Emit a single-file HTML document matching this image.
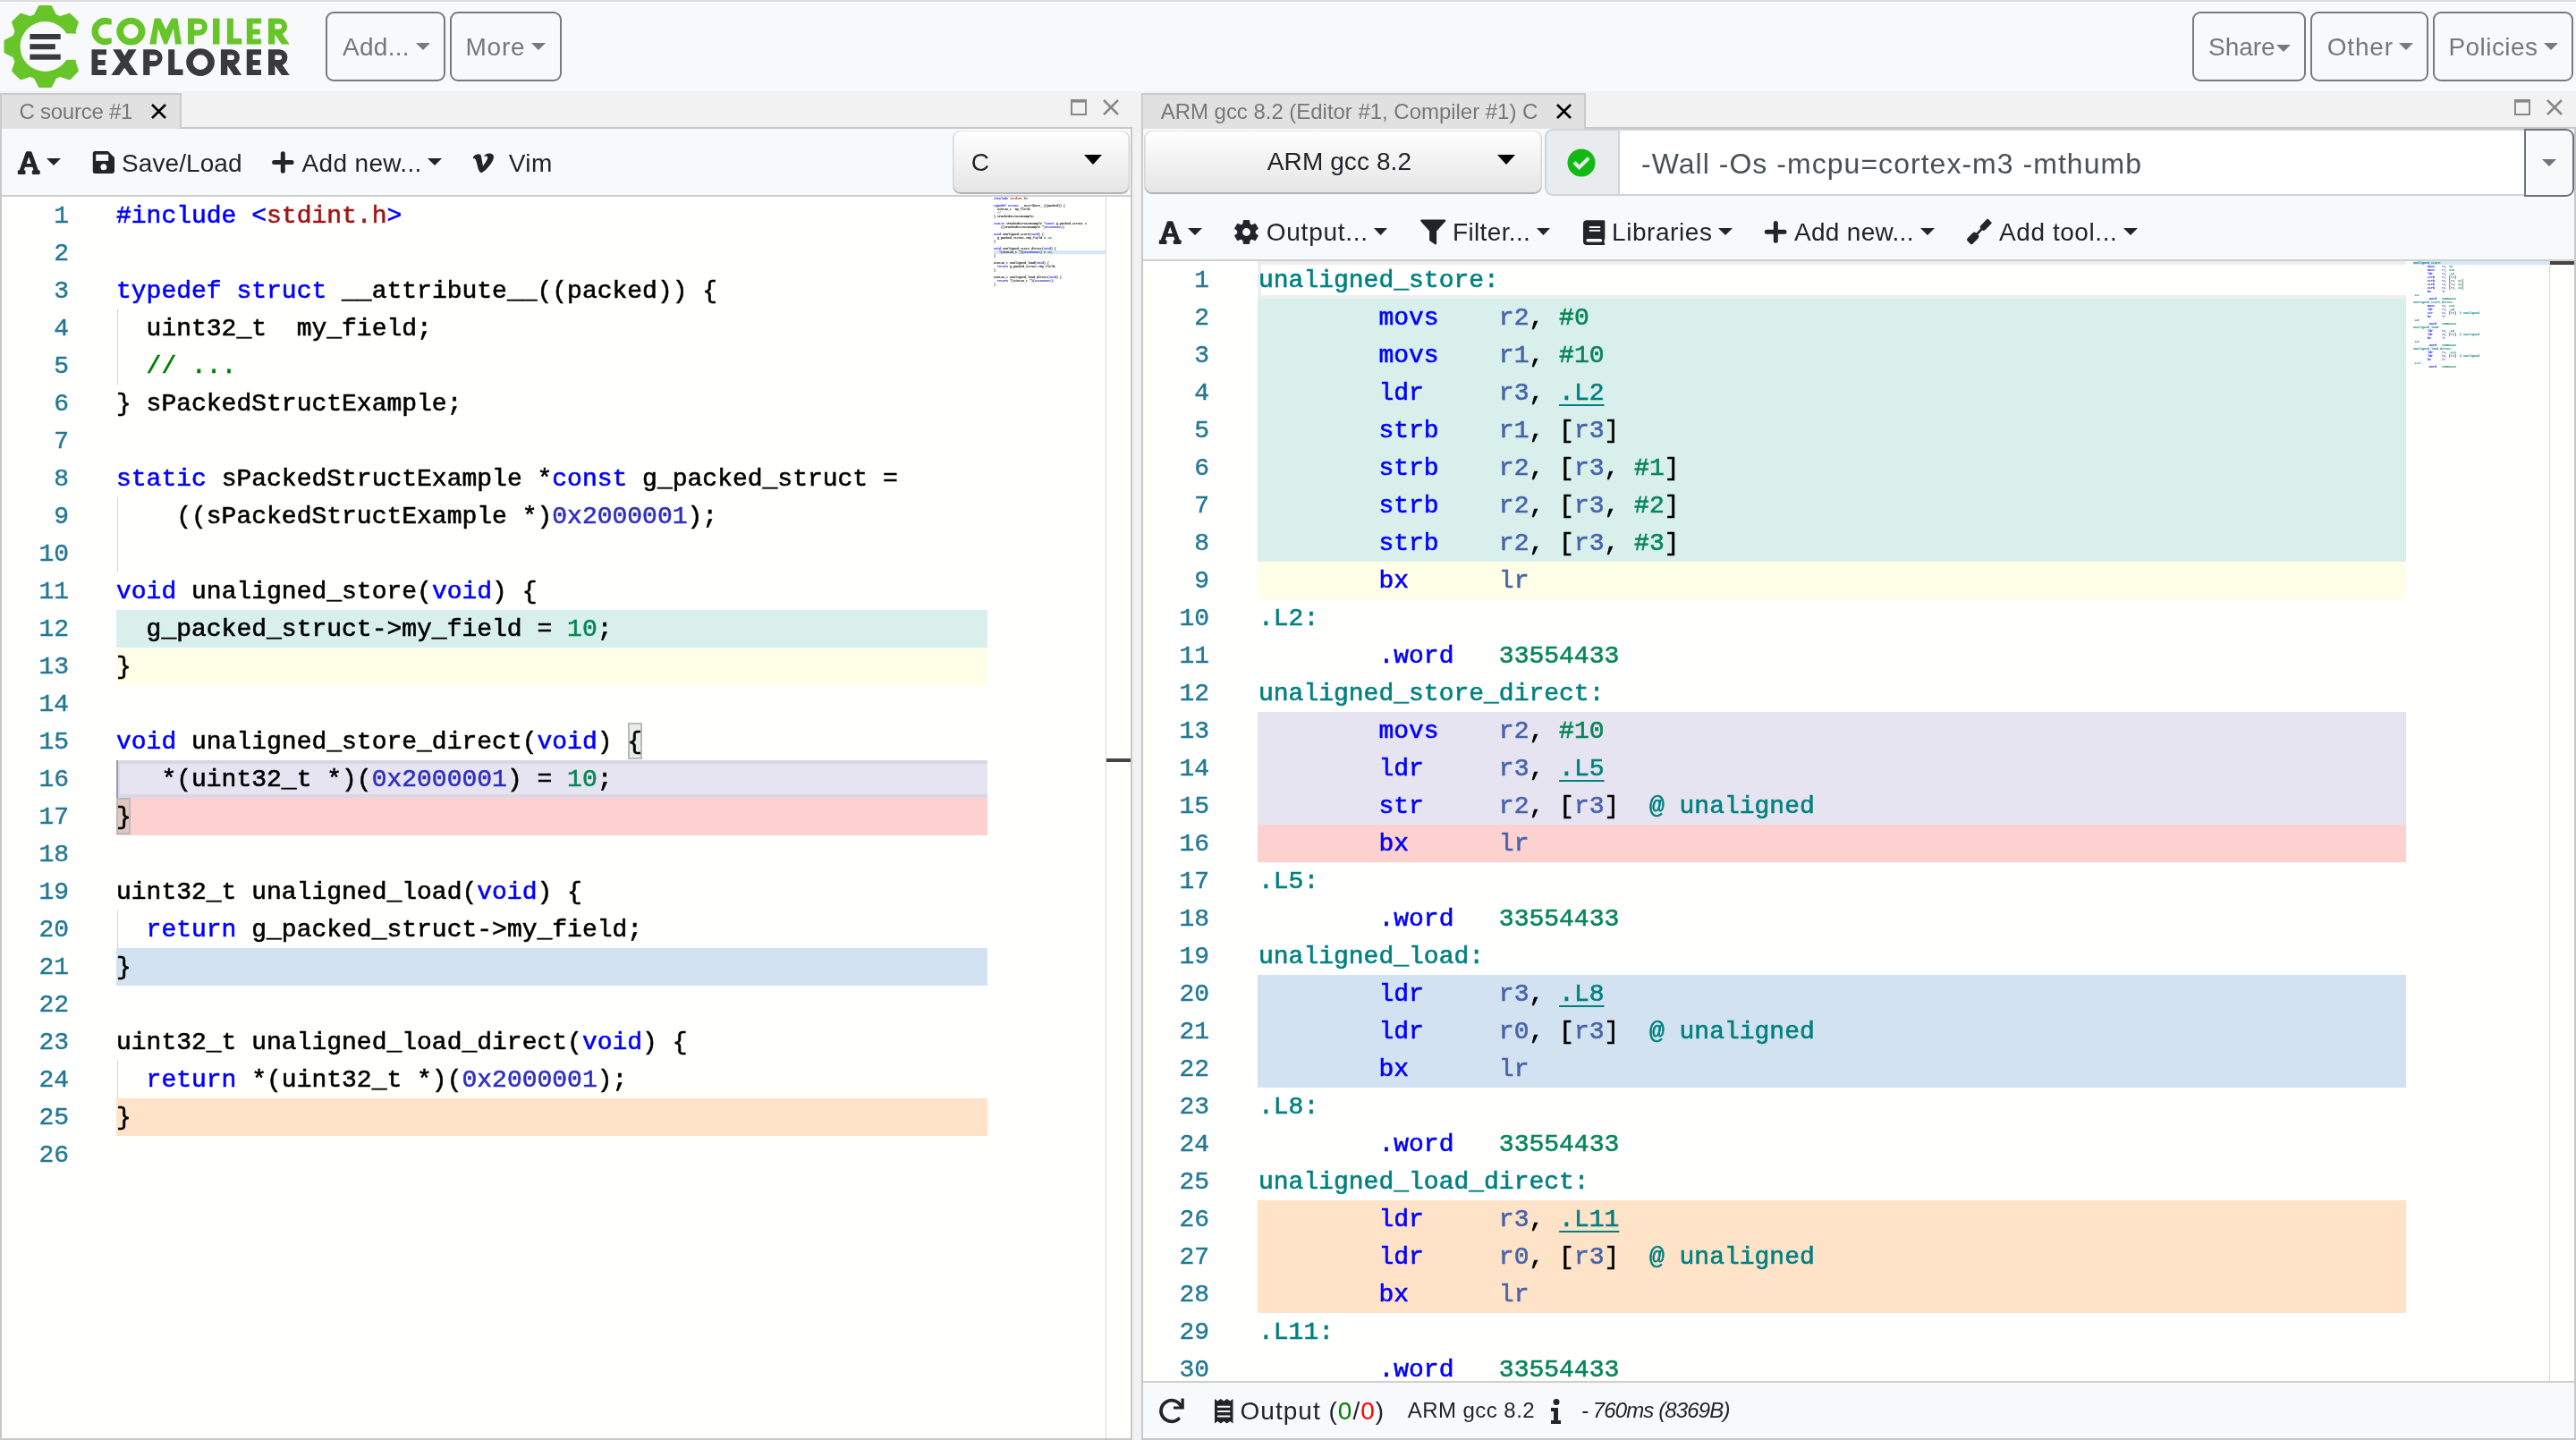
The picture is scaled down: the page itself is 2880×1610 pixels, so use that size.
<!DOCTYPE html><html><head><meta charset="utf-8"><title>Compiler Explorer</title><style>
*{box-sizing:border-box}
html,body{margin:0;padding:0}
body{width:2880px;height:1610px;overflow:hidden;position:relative;background:#f2f2f2;font-family:"Liberation Sans", sans-serif}
.ab{position:absolute;display:block}
.t{position:absolute;white-space:pre}
.r{position:absolute}
.code{position:absolute;font-family:"Liberation Mono", monospace;font-size:28px;line-height:42px;white-space:pre;color:#000;-webkit-text-stroke:0.6px currentColor}
.ln{position:absolute;font-family:"Liberation Mono", monospace;font-size:28px;line-height:42px;white-space:pre;color:#237893;text-align:right;-webkit-text-stroke:0.4px currentColor}
.k{color:#0000ff} .s{color:#a31515} .c{color:#008000} .n{color:#098658} .h{color:#3030c0}
.lb{color:#008080} .mn{color:#0000ff} .rg{color:#4864aa} .u{text-decoration:underline;text-underline-offset:5px;text-decoration-thickness:2px}
.mm{position:absolute;font-family:"Liberation Mono", monospace;font-size:28px;line-height:42px;white-space:pre;color:#000;transform-origin:0 0}
</style></head><body><div id="root" style="position:absolute;left:0;top:0;width:2880px;height:1610px;overflow:hidden;will-change:transform">
<div class="r" style="left:0;top:0;width:2880px;height:102px;background:#f8f9fa"></div>
<div class="r" style="left:0;top:0;width:2880px;height:2px;background:#dcdcdc"></div>
<svg class="ab" style="left:0;top:0" width="340" height="102" viewBox="0 0 340 102">
<g fill="#67c52a" stroke="#67c52a" stroke-width="3" stroke-linejoin="round"><polygon points="39.00,18.00 44.30,7.50 56.70,7.50 62.00,18.00"/><polygon points="66.41,19.83 77.58,16.15 86.35,24.92 82.67,36.09"/><polygon points="84.50,40.50 95.00,45.80 95.00,58.20 84.50,63.50"/><polygon points="82.67,67.91 86.35,79.08 77.58,87.85 66.41,84.17"/><polygon points="62.00,86.00 56.70,96.50 44.30,96.50 39.00,86.00"/><polygon points="34.59,84.17 23.42,87.85 14.65,79.08 18.33,67.91"/><polygon points="16.50,63.50 6.00,58.20 6.00,45.80 16.50,40.50"/><polygon points="18.33,36.09 14.65,24.92 23.42,16.15 34.59,19.83"/></g>
<circle cx="50.5" cy="52" r="38" fill="#67c52a"/>
<circle cx="50.5" cy="52" r="28" fill="#f8f9fa"/>
<rect x="60" y="37.5" width="40" height="29.3" fill="#f8f9fa"/>
<g fill="#3a3a3c"><rect x="33.4" y="38" width="34.3" height="6"/><rect x="33.4" y="49.2" width="28.4" height="6"/><rect x="33.4" y="60.7" width="34.3" height="6"/></g>
<path d="M102.50 35.05A14.9 15.2 0 1 0 132.30 35.05A14.9 15.2 0 1 0 102.50 35.05ZM109.95 35.05A7.45 7.9 0 1 1 124.85 35.05A7.45 7.9 0 1 1 109.95 35.05Z" fill="#67c52a" fill-rule="evenodd"/><path d="M117.4 27.60H126V42.50H117.4Z M124.8 18.5H133V51.6H124.8Z" fill="#f8f9fa"/><path d="M130.25 35.05A16.1 15.4 0 1 0 162.45 35.05A16.1 15.4 0 1 0 130.25 35.05ZM138.05 35.05A8.3 8.15 0 1 1 154.65 35.05A8.3 8.15 0 1 1 138.05 35.05Z" fill="#67c52a" fill-rule="evenodd"/><path d="M167.20 49.60L172.80 20.50L179.30 20.50L185.40 33.10L191.90 20.50L198.40 20.50L203.10 49.60L196.10 49.60L193.90 31.90L186.80 49.60L183.50 49.60L176.80 31.90L174.70 49.60Z" fill="#67c52a" fill-rule="evenodd"/><path d="M210 20.5H222.40A9.60 9.60 0 0 1 222.40 39.71H217.2V49.6H210ZM217.2 26.80H222.70A3.30 3.30 0 0 1 222.70 33.41H217.2Z" fill="#67c52a" fill-rule="evenodd"/><path d="M238 20.5H245.5V49.6H238Z" fill="#67c52a" fill-rule="evenodd"/><path d="M253.90 20.50L260.90 20.50L260.90 43.10L270.20 43.10L270.20 49.60L253.90 49.60Z" fill="#67c52a" fill-rule="evenodd"/><path d="M275.80 20.50L292.00 20.50L292.00 26.60L282.60 26.60L282.60 32.43L290.70 32.43L290.70 38.53L282.60 38.53L282.60 43.50L292.00 43.50L292.00 49.60L275.80 49.60Z" fill="#67c52a" fill-rule="evenodd"/><path d="M300 20.5H312.23A9.17 9.17 0 0 1 312.23 38.83H307.4V49.6H300ZM307.4 26.80H312.40A2.87 2.87 0 0 1 312.40 32.53H307.4Z" fill="#67c52a" fill-rule="evenodd"/><path d="M306.90 34.83L315.23 34.83L316.20 38.83L323.70 49.60L314.90 49.60L307.40 38.83Z" fill="#67c52a" fill-rule="evenodd"/><path d="M102.50 55.20L119.00 55.20L119.00 61.30L109.30 61.30L109.30 67.01L117.70 67.01L117.70 73.11L109.30 73.11L109.30 77.90L119.00 77.90L119.00 84.00L102.50 84.00Z" fill="#3a3a3c" fill-rule="evenodd"/><path d="M126.20 55.20L135.20 55.20L139.30 62.50L143.50 55.20L152.60 55.20L143.90 69.30L154.20 84.00L145.10 84.00L139.30 75.80L133.40 84.00L124.30 84.00L134.70 69.30Z" fill="#3a3a3c" fill-rule="evenodd"/><path d="M160.2 55.2H172.10A9.50 9.50 0 0 1 172.10 74.21H167.39999999999998V84.0H160.2ZM167.39999999999998 61.50H172.90A3.20 3.20 0 0 1 172.90 67.91H167.39999999999998Z" fill="#3a3a3c" fill-rule="evenodd"/><path d="M188.20 55.20L195.20 55.20L195.20 77.50L204.50 77.50L204.50 84.00L188.20 84.00Z" fill="#3a3a3c" fill-rule="evenodd"/><path d="M208.20 69.60A15.85 15.35 0 1 0 239.90 69.60A15.85 15.35 0 1 0 208.20 69.60ZM215.75 69.60A8.3 8.4 0 1 1 232.35 69.60A8.3 8.4 0 1 1 215.75 69.60Z" fill="#3a3a3c" fill-rule="evenodd"/><path d="M246.9 55.2H258.83A9.07 9.07 0 0 1 258.83 73.34H254.3V84.0H246.9ZM254.3 61.50H259.30A2.77 2.77 0 0 1 259.30 67.04H254.3Z" fill="#3a3a3c" fill-rule="evenodd"/><path d="M253.80 69.34L261.83 69.34L263.10 73.34L270.20 84.00L261.40 84.00L254.30 73.34Z" fill="#3a3a3c" fill-rule="evenodd"/><path d="M275.80 55.20L292.00 55.20L292.00 61.30L282.60 61.30L282.60 67.01L290.70 67.01L290.70 73.11L282.60 73.11L282.60 77.90L292.00 77.90L292.00 84.00L275.80 84.00Z" fill="#3a3a3c" fill-rule="evenodd"/><path d="M300 55.2H312.33A9.07 9.07 0 0 1 312.33 73.34H307.4V84.0H300ZM307.4 61.50H312.40A2.77 2.77 0 0 1 312.40 67.04H307.4Z" fill="#3a3a3c" fill-rule="evenodd"/><path d="M306.90 69.34L315.33 69.34L316.20 73.34L323.70 84.00L314.90 84.00L307.40 73.34Z" fill="#3a3a3c" fill-rule="evenodd"/></svg>
<div class="r" style="left:364px;top:13px;width:134px;height:78px;border:2px solid #7a7a7a;border-radius:9px"></div><div class="t" style="left:383.00px;top:33.30px;font-size:28px;line-height:40px;color:#777;letter-spacing:0.284px;">Add...</div><svg class="ab" style="left:465px;top:48px" width="16" height="8" viewBox="0 0 16 8"><path d="M0 0H16L8.0 8Z" fill="#7a7a7a"/></svg>
<div class="r" style="left:503px;top:13px;width:125px;height:78px;border:2px solid #7a7a7a;border-radius:9px"></div><div class="t" style="left:520.50px;top:33.30px;font-size:28px;line-height:40px;color:#777;letter-spacing:0.760px;">More</div><svg class="ab" style="left:594px;top:48px" width="16" height="8" viewBox="0 0 16 8"><path d="M0 0H16L8.0 8Z" fill="#7a7a7a"/></svg>
<div class="r" style="left:2451px;top:13px;width:127px;height:78px;border:2px solid #7a7a7a;border-radius:9px"></div><div class="t" style="left:2469.00px;top:33.30px;font-size:28px;line-height:40px;color:#777;letter-spacing:-0.036px;">Share</div><svg class="ab" style="left:2545px;top:50px" width="16" height="8" viewBox="0 0 16 8"><path d="M0 0H16L8.0 8Z" fill="#7a7a7a"/></svg>
<div class="r" style="left:2583px;top:13px;width:132px;height:78px;border:2px solid #7a7a7a;border-radius:9px"></div><div class="t" style="left:2601.70px;top:33.30px;font-size:28px;line-height:40px;color:#777;letter-spacing:0.849px;">Other</div><svg class="ab" style="left:2682px;top:47.5px" width="16" height="8" viewBox="0 0 16 8"><path d="M0 0H16L8.0 8Z" fill="#7a7a7a"/></svg>
<div class="r" style="left:2720px;top:13px;width:157px;height:78px;border:2px solid #7a7a7a;border-radius:9px"></div><div class="t" style="left:2737.50px;top:33.30px;font-size:28px;line-height:40px;color:#777;letter-spacing:0.431px;">Policies</div><svg class="ab" style="left:2844px;top:47.5px" width="16" height="8" viewBox="0 0 16 8"><path d="M0 0H16L8.0 8Z" fill="#7a7a7a"/></svg>
<div class="r" style="left:0;top:142px;width:1266px;height:1468px;border:2px solid #c8c8c8;background:#f8f9fa"></div>
<div class="r" style="left:0;top:104px;width:203px;height:40px;background:#e1e1e1;border:2px solid #cbcbcb;border-bottom:none"></div>
<div class="t" style="left:21.50px;top:104.68px;font-size:24px;line-height:40px;color:#777;letter-spacing:-0.255px;">C source #1</div>
<svg class="ab" style="left:169px;top:116px" width="17" height="17" viewBox="0 0 17 17"><path d="M1 1L16 16M16 1L1 16" stroke="#000" stroke-width="2.6" fill="none"/></svg>
<svg class="ab" style="left:1197px;top:111px" width="18" height="18" viewBox="0 0 18 18"><rect x="1" y="1" width="16" height="16" fill="none" stroke="#888" stroke-width="2"/><rect x="0" y="0" width="18" height="3.6" fill="#888"/></svg>
<svg class="ab" style="left:1233px;top:111px" width="18" height="18" viewBox="0 0 18 18"><path d="M1 1L17 17M17 1L1 17" stroke="#888" stroke-width="2.5" fill="none"/></svg>
<div class="r" style="left:1276px;top:142px;width:1604px;height:1468px;border:2px solid #c8c8c8;background:#f8f9fa"></div>
<div class="r" style="left:1276px;top:104px;width:497px;height:40px;background:#e1e1e1;border:2px solid #cbcbcb;border-bottom:none"></div>
<div class="t" style="left:1297.70px;top:105.48px;font-size:24px;line-height:40px;color:#777;letter-spacing:-0.032px;">ARM gcc 8.2 (Editor #1, Compiler #1) C</div>
<svg class="ab" style="left:1740px;top:116px" width="17" height="17" viewBox="0 0 17 17"><path d="M1 1L16 16M16 1L1 16" stroke="#000" stroke-width="2.6" fill="none"/></svg>
<svg class="ab" style="left:2811px;top:111px" width="18" height="18" viewBox="0 0 18 18"><rect x="1" y="1" width="16" height="16" fill="none" stroke="#888" stroke-width="2"/><rect x="0" y="0" width="18" height="3.6" fill="#888"/></svg>
<svg class="ab" style="left:2847px;top:111px" width="18" height="18" viewBox="0 0 18 18"><path d="M1 1L17 17M17 1L1 17" stroke="#888" stroke-width="2.5" fill="none"/></svg>
<div class="r" style="left:2px;top:218px;width:1262px;height:2px;background:#cfcfcf"></div>
<svg class="ab" style="left:19px;top:168.5px" width="27" height="27" viewBox="0 0 27 27"><path d="M11.2 0.3H15.2Q16.2 0.3 16.6 1.3L23.8 21.3H24.6Q25.7 21.3 25.7 22.4V24.7Q25.7 25.9 24.6 25.9H17.9Q16.8 25.9 16.8 24.7V22.4Q16.8 21.3 17.9 21.3H18.6L17.3 17.8H9L7.7 21.3H8.4Q9.5 21.3 9.5 22.4V24.7Q9.5 25.9 8.4 25.9H1.9Q0.8 25.9 0.8 24.7V22.4Q0.8 21.3 1.9 21.3H2.8L9.8 1.3Q10.2 0.3 11.2 0.3ZM13.2 6.6L10.6 14H15.8Z" fill="#212529" fill-rule="evenodd"/></svg>
<svg class="ab" style="left:52px;top:177px" width="16" height="8" viewBox="0 0 16 8"><path d="M0 0H16L8.0 8Z" fill="#212529"/></svg>
<svg class="ab" style="left:103px;top:169px" width="26" height="26" viewBox="0 0 26 26"><path d="M3.3 0H17.8L25 7.2V22A3 3 0 0 1 22 25H3.3A2.5 2.5 0 0 1 0.8 22.5V2.5A2.5 2.5 0 0 1 3.3 0Z" fill="#212529"/><rect x="4.2" y="3.7" width="14" height="7.2" fill="#f8f9fa"/><circle cx="12.9" cy="17.7" r="3.5" fill="#f8f9fa"/></svg>
<div class="t" style="left:136.00px;top:162.60px;font-size:28px;line-height:40px;color:#212529;letter-spacing:0.085px;">Save/Load</div>
<svg class="ab" style="left:302px;top:167px" width="29" height="29" viewBox="0 0 29 29"><path d="M14.3 4.7V24.2M4.6 14.5H24.1" stroke="#212529" stroke-width="5" stroke-linecap="round"/></svg>
<div class="t" style="left:337.60px;top:162.60px;font-size:28px;line-height:40px;color:#212529;letter-spacing:0.325px;">Add new...</div>
<svg class="ab" style="left:478px;top:177px" width="16" height="8" viewBox="0 0 16 8"><path d="M0 0H16L8.0 8Z" fill="#212529"/></svg>
<svg class="ab" style="left:527.5px;top:170.5px" width="26" height="22" viewBox="0 0 26 24" preserveAspectRatio="none"><path d="M1 5C4 1 9 0 10 4L12 16C14 13 18 7 17 5C16 3 14 4 13 5C14 -1 24 -1 24 5C24 11 15 22 11 24C7 25 6 16 5 12C4 9 4 6 1 7Z" fill="#212529"/></svg>
<div class="t" style="left:568.70px;top:162.60px;font-size:28px;line-height:40px;color:#212529;letter-spacing:0.455px;">Vim</div>
<div class="r" style="left:1065px;top:145.5px;width:198px;height:69px;border-radius:9px;background:linear-gradient(#ffffff,#e5e5e5);box-shadow:inset 1.5px 0 0 #d6d6d6, inset -1.5px 0 0 #d6d6d6, inset 0 1px 0 #e8e8e8, 0 2px 0 #b2b2b2"></div>
<div class="t" style="left:1085.70px;top:161.60px;font-size:28px;line-height:40px;color:#212529;letter-spacing:0.000px;">C</div>
<svg class="ab" style="left:1212px;top:173px" width="20" height="11" viewBox="0 0 20 11"><path d="M0 0H20L10.0 11Z" fill="#000"/></svg>
<div class="r" style="left:2px;top:220px;width:1262px;height:1388px;background:#fffffe;overflow:hidden"></div>
<div class="r" style="left:130px;top:682px;width:974px;height:42px;background:#d8efec"></div>
<div class="r" style="left:130px;top:724px;width:974px;height:42px;background:#fffee6"></div>
<div class="r" style="left:130px;top:850px;width:974px;height:42px;background:#e6e4f1"></div>
<div class="r" style="left:130px;top:892px;width:974px;height:42px;background:#fdd1cf"></div>
<div class="r" style="left:130px;top:1060px;width:974px;height:42px;background:#d3e2f0"></div>
<div class="r" style="left:130px;top:1228px;width:974px;height:42px;background:#fee3c9"></div>
<div class="r" style="left:130px;top:850px;width:974px;height:42px;border:4px solid rgba(0,0,0,0.055);border-right:none"></div>
<div class="r" style="left:131px;top:346px;width:1px;height:84px;background:#d3d3d3"></div>
<div class="r" style="left:131px;top:556px;width:1px;height:84px;background:#d3d3d3"></div>
<div class="r" style="left:131px;top:1018px;width:1px;height:42px;background:#d3d3d3"></div>
<div class="r" style="left:131px;top:1186px;width:1px;height:42px;background:#d3d3d3"></div>
<div class="r" style="left:701.7px;top:808px;width:16px;height:41px;background:#e5efe5;border:2px solid #b9b9b9"></div>
<div class="r" style="left:130px;top:892px;width:16px;height:41px;background:#e0c8c0;border:2px solid #b9b9b9"></div>
<div class="r" style="left:130px;top:850px;width:2px;height:42px;background:#9b99ab"></div>
<div class="code" style="left:130px;top:221px"><span class="k">#include</span> <span class="k">&lt;</span><span class="s">stdint.h</span><span class="k">&gt;</span>

<span class="k">typedef</span> <span class="k">struct</span> __attribute__((packed)) {
  uint32_t  my_field;
  <span class="c">// ...</span>
} sPackedStructExample;

<span class="k">static</span> sPackedStructExample *<span class="k">const</span> g_packed_struct =
    ((sPackedStructExample *)<span class="h">0x2000001</span>);

<span class="k">void</span> unaligned_store(<span class="k">void</span>) {
  g_packed_struct-&gt;my_field = <span class="n">10</span>;
}

<span class="k">void</span> unaligned_store_direct(<span class="k">void</span>) {
   *(uint32_t *)(<span class="h">0x2000001</span>) = <span class="n">10</span>;
}

uint32_t unaligned_load(<span class="k">void</span>) {
  <span class="k">return</span> g_packed_struct-&gt;my_field;
}

uint32_t unaligned_load_direct(<span class="k">void</span>) {
  <span class="k">return</span> *(uint32_t *)(<span class="h">0x2000001</span>);
}
</div>
<div class="ln" style="left:2px;top:221px;width:75px">1
2
3
4
5
6
7
8
9
10
11
12
13
14
15
16
17
18
19
20
21
22
23
24
25
26</div>
<div class="r" style="left:1104px;top:220px;width:132px;height:1388px;background:#fffffe"></div>
<div class="r" style="left:1111px;top:280px;width:125px;height:4px;background:#d6e7fb"></div>
<div class="mm" style="left:1111px;top:220px;transform:scale(0.1190,0.0952);font-weight:bold"><span class="k">#include</span> <span class="k">&lt;</span><span class="s">stdint.h</span><span class="k">&gt;</span>

<span class="k">typedef</span> <span class="k">struct</span> __attribute__((packed)) {
  uint32_t  my_field;
  <span class="c">// ...</span>
} sPackedStructExample;

<span class="k">static</span> sPackedStructExample *<span class="k">const</span> g_packed_struct =
    ((sPackedStructExample *)<span class="h">0x2000001</span>);

<span class="k">void</span> unaligned_store(<span class="k">void</span>) {
  g_packed_struct-&gt;my_field = <span class="n">10</span>;
}

<span class="k">void</span> unaligned_store_direct(<span class="k">void</span>) {
   *(uint32_t *)(<span class="h">0x2000001</span>) = <span class="n">10</span>;
}

uint32_t unaligned_load(<span class="k">void</span>) {
  <span class="k">return</span> g_packed_struct-&gt;my_field;
}

uint32_t unaligned_load_direct(<span class="k">void</span>) {
  <span class="k">return</span> *(uint32_t *)(<span class="h">0x2000001</span>);
}
</div>
<div class="r" style="left:1236px;top:220px;width:1px;height:1388px;background:#d8d8d8"></div>
<div class="r" style="left:1237px;top:848px;width:27px;height:4px;background:#454545"></div>
<div class="r" style="left:1279px;top:145.5px;width:445px;height:69px;border-radius:9px;background:linear-gradient(#ffffff,#e5e5e5);box-shadow:inset 1.5px 0 0 #d6d6d6, inset -1.5px 0 0 #d6d6d6, inset 0 1px 0 #e8e8e8, 0 2px 0 #b2b2b2"></div>
<div class="t" style="left:1416.80px;top:160.90px;font-size:28px;line-height:40px;color:#212529;letter-spacing:0.100px;">ARM gcc 8.2</div>
<svg class="ab" style="left:1674px;top:173px" width="20" height="11" viewBox="0 0 20 11"><path d="M0 0H20L10.0 11Z" fill="#000"/></svg>
<div class="r" style="left:1727px;top:144px;width:84px;height:75px;background:#e9ecef;border:2px solid #ced4da;border-right:none;border-radius:9px 0 0 9px"></div>
<svg class="ab" style="left:1752px;top:166px" width="32" height="32" viewBox="0 0 32 32"><circle cx="16" cy="16" r="15.5" fill="#13b913"/><path d="M8 15.5L13.6 21.2L24.2 10.7" stroke="#e9ecef" stroke-width="4" fill="none" stroke-linecap="butt" stroke-linejoin="miter"/></svg>
<div class="r" style="left:1809px;top:144px;width:1014px;height:75px;background:#fff;border:2px solid #ced4da;border-right:none"></div>
<div class="t" style="left:1835.00px;top:162.91px;font-size:32px;line-height:40px;color:#495057;letter-spacing:1.031px;">-Wall -Os -mcpu=cortex-m3 -mthumb</div>
<div class="r" style="left:2822px;top:144px;width:56px;height:76px;background:#f8f9fa;border:2px solid #6c757d;border-radius:0 9px 9px 0"></div>
<svg class="ab" style="left:2842px;top:178px" width="16" height="8" viewBox="0 0 16 8"><path d="M0 0H16L8.0 8Z" fill="#6c757d"/></svg>
<svg class="ab" style="left:1295px;top:246.5px" width="27" height="27" viewBox="0 0 27 27"><path d="M11.2 0.3H15.2Q16.2 0.3 16.6 1.3L23.8 21.3H24.6Q25.7 21.3 25.7 22.4V24.7Q25.7 25.9 24.6 25.9H17.9Q16.8 25.9 16.8 24.7V22.4Q16.8 21.3 17.9 21.3H18.6L17.3 17.8H9L7.7 21.3H8.4Q9.5 21.3 9.5 22.4V24.7Q9.5 25.9 8.4 25.9H1.9Q0.8 25.9 0.8 24.7V22.4Q0.8 21.3 1.9 21.3H2.8L9.8 1.3Q10.2 0.3 11.2 0.3ZM13.2 6.6L10.6 14H15.8Z" fill="#212529" fill-rule="evenodd"/></svg>
<svg class="ab" style="left:1328px;top:255px" width="16" height="8" viewBox="0 0 16 8"><path d="M0 0H16L8.0 8Z" fill="#212529"/></svg>
<svg class="ab" style="left:1380.4px;top:246px" width="27" height="27" viewBox="0 0 27 27"><g fill="#212529" stroke="#212529" stroke-width="1" stroke-linejoin="round"><polygon points="9.90,4.50 10.40,0.30 16.60,0.30 17.10,4.50"/><polygon points="19.49,5.88 23.38,4.22 26.48,9.58 23.09,12.12"/><polygon points="23.09,14.88 26.48,17.42 23.38,22.78 19.49,21.12"/><polygon points="17.10,22.50 16.60,26.70 10.40,26.70 9.90,22.50"/><polygon points="7.51,21.12 3.62,22.78 0.52,17.42 3.91,14.88"/><polygon points="3.91,12.12 0.52,9.58 3.62,4.22 7.51,5.88"/></g><circle cx="13.5" cy="13.5" r="10.3" fill="#212529"/><circle cx="13.5" cy="13.5" r="4.4" fill="#f8f9fa"/></svg>
<div class="t" style="left:1415.80px;top:240.10px;font-size:28px;line-height:40px;color:#212529;letter-spacing:0.736px;">Output...</div>
<svg class="ab" style="left:1536.3px;top:255px" width="15" height="8" viewBox="0 0 15 8"><path d="M0 0H15L7.5 8Z" fill="#212529"/></svg>
<svg class="ab" style="left:1586px;top:244px" width="32" height="31" viewBox="0 0 32 31"><path d="M3.2 2.7H29.2L19 13.9V28.3L13.2 24.4V13.9Z" fill="#212529" stroke="#212529" stroke-width="2.2" stroke-linejoin="round"/></svg>
<div class="t" style="left:1624.00px;top:240.10px;font-size:28px;line-height:40px;color:#212529;letter-spacing:0.346px;">Filter...</div>
<svg class="ab" style="left:1718.3px;top:255px" width="15" height="8" viewBox="0 0 15 8"><path d="M0 0H15L7.5 8Z" fill="#212529"/></svg>
<svg class="ab" style="left:1769px;top:244.5px" width="27" height="30" viewBox="0 0 27 30"><path d="M5 1.2H24.3Q25.3 1.2 25.3 2.2V21.8Q25.3 22.6 24.6 22.9V26.8Q25.3 27 25.3 27.8V28Q25.3 29 24.3 29H5.3Q1 29 1 24.7V5.2Q1 1.2 5 1.2Z" fill="#212529"/><rect x="4.4" y="22.1" width="17.8" height="3.4" rx="1.7" fill="#f8f9fa"/><rect x="7.8" y="8" width="12.4" height="2" fill="#f8f9fa"/><rect x="7.8" y="11.9" width="12.4" height="1.8" fill="#f8f9fa"/></svg>
<div class="t" style="left:1802.00px;top:240.10px;font-size:28px;line-height:40px;color:#212529;letter-spacing:0.565px;">Libraries</div>
<svg class="ab" style="left:1921px;top:255px" width="16" height="8" viewBox="0 0 16 8"><path d="M0 0H16L8.0 8Z" fill="#212529"/></svg>
<svg class="ab" style="left:1971px;top:245px" width="29" height="29" viewBox="0 0 29 29"><path d="M14.3 4.5V24.2M4.3 14.3H24" stroke="#212529" stroke-width="5" stroke-linecap="round"/></svg>
<div class="t" style="left:2006.00px;top:240.10px;font-size:28px;line-height:40px;color:#212529;letter-spacing:0.302px;">Add new...</div>
<svg class="ab" style="left:2147px;top:255px" width="16" height="8" viewBox="0 0 16 8"><path d="M0 0H16L8.0 8Z" fill="#212529"/></svg>
<svg class="ab" style="left:1998px;top:244px" width="0" height="0"></svg>
<svg class="ab" style="left:2193px;top:240px" width="40" height="40" viewBox="0 0 40 40"><g transform="translate(8.2 31) rotate(-46)" fill="#212529"><path d="M0 -2Q0 -4.3 2.3 -4.3H10.5Q13.2 -4.3 13.2 -1.6V1.6Q13.2 4.3 10.5 4.3H2.3Q0 4.3 0 2Z"/><rect x="12" y="-1.4" width="9" height="2.8"/><path d="M20.5 -2.4L22 -3.5H32.6Q33.7 -3.5 33.7 -2.4V2.4Q33.7 3.5 32.6 3.5H22L20.5 2.4Z"/></g></svg>
<div class="t" style="left:2235.00px;top:240.10px;font-size:28px;line-height:40px;color:#212529;letter-spacing:0.570px;">Add tool...</div>
<svg class="ab" style="left:2374px;top:255px" width="16" height="8" viewBox="0 0 16 8"><path d="M0 0H16L8.0 8Z" fill="#212529"/></svg>
<div class="r" style="left:1278px;top:290px;width:1600px;height:2px;background:#cfcfcf"></div>
<div class="r" style="left:1278px;top:292px;width:1600px;height:1252px;background:#fffffe;overflow:hidden"></div>
<div class="r" style="left:1278px;top:292px;width:1600px;height:1252px;overflow:hidden">
<div class="r" style="left:128px;top:42px;width:1284px;height:42px;background:#d8efec"></div>
<div class="r" style="left:128px;top:84px;width:1284px;height:42px;background:#d8efec"></div>
<div class="r" style="left:128px;top:126px;width:1284px;height:42px;background:#d8efec"></div>
<div class="r" style="left:128px;top:168px;width:1284px;height:42px;background:#d8efec"></div>
<div class="r" style="left:128px;top:210px;width:1284px;height:42px;background:#d8efec"></div>
<div class="r" style="left:128px;top:252px;width:1284px;height:42px;background:#d8efec"></div>
<div class="r" style="left:128px;top:294px;width:1284px;height:42px;background:#d8efec"></div>
<div class="r" style="left:128px;top:336px;width:1284px;height:42px;background:#fffee6"></div>
<div class="r" style="left:128px;top:504px;width:1284px;height:42px;background:#e6e4f1"></div>
<div class="r" style="left:128px;top:546px;width:1284px;height:42px;background:#e6e4f1"></div>
<div class="r" style="left:128px;top:588px;width:1284px;height:42px;background:#e6e4f1"></div>
<div class="r" style="left:128px;top:630px;width:1284px;height:42px;background:#fdd1cf"></div>
<div class="r" style="left:128px;top:798px;width:1284px;height:42px;background:#d3e2f0"></div>
<div class="r" style="left:128px;top:840px;width:1284px;height:42px;background:#d3e2f0"></div>
<div class="r" style="left:128px;top:882px;width:1284px;height:42px;background:#d3e2f0"></div>
<div class="r" style="left:128px;top:1050px;width:1284px;height:42px;background:#fee3c9"></div>
<div class="r" style="left:128px;top:1092px;width:1284px;height:42px;background:#fee3c9"></div>
<div class="r" style="left:128px;top:1134px;width:1284px;height:42px;background:#fee3c9"></div>
<div class="r" style="left:128px;top:0px;width:1284px;height:42px;border:4px solid #eeeeee;border-right:none"></div>
<div class="code" style="left:129px;top:1px"><span class="lb">unaligned_store:</span>
        <span class="mn">movs</span>    <span class="rg">r2</span>, <span class="n">#0</span>
        <span class="mn">movs</span>    <span class="rg">r1</span>, <span class="n">#10</span>
        <span class="mn">ldr</span>     <span class="rg">r3</span>, <span class="lb u">.L2</span>
        <span class="mn">strb</span>    <span class="rg">r1</span>, [<span class="rg">r3</span>]
        <span class="mn">strb</span>    <span class="rg">r2</span>, [<span class="rg">r3</span>, <span class="n">#1</span>]
        <span class="mn">strb</span>    <span class="rg">r2</span>, [<span class="rg">r3</span>, <span class="n">#2</span>]
        <span class="mn">strb</span>    <span class="rg">r2</span>, [<span class="rg">r3</span>, <span class="n">#3</span>]
        <span class="mn">bx</span>      <span class="rg">lr</span>
<span class="lb">.L2:</span>
        <span class="mn">.word</span>   <span class="n">33554433</span>
<span class="lb">unaligned_store_direct:</span>
        <span class="mn">movs</span>    <span class="rg">r2</span>, <span class="n">#10</span>
        <span class="mn">ldr</span>     <span class="rg">r3</span>, <span class="lb u">.L5</span>
        <span class="mn">str</span>     <span class="rg">r2</span>, [<span class="rg">r3</span>]  <span class="lb">@ unaligned</span>
        <span class="mn">bx</span>      <span class="rg">lr</span>
<span class="lb">.L5:</span>
        <span class="mn">.word</span>   <span class="n">33554433</span>
<span class="lb">unaligned_load:</span>
        <span class="mn">ldr</span>     <span class="rg">r3</span>, <span class="lb u">.L8</span>
        <span class="mn">ldr</span>     <span class="rg">r0</span>, [<span class="rg">r3</span>]  <span class="lb">@ unaligned</span>
        <span class="mn">bx</span>      <span class="rg">lr</span>
<span class="lb">.L8:</span>
        <span class="mn">.word</span>   <span class="n">33554433</span>
<span class="lb">unaligned_load_direct:</span>
        <span class="mn">ldr</span>     <span class="rg">r3</span>, <span class="lb u">.L11</span>
        <span class="mn">ldr</span>     <span class="rg">r0</span>, [<span class="rg">r3</span>]  <span class="lb">@ unaligned</span>
        <span class="mn">bx</span>      <span class="rg">lr</span>
<span class="lb">.L11:</span>
        <span class="mn">.word</span>   <span class="n">33554433</span></div>
<div class="ln" style="left:0px;top:1px;width:74px">1
2
3
4
5
6
7
8
9
10
11
12
13
14
15
16
17
18
19
20
21
22
23
24
25
26
27
28
29
30</div>
<div class="r" style="left:1412px;top:0;width:160px;height:1252px;background:#fffffe"></div>
<div class="r" style="left:1420px;top:0;width:152px;height:4px;background:#d6e7fb"></div>
<div class="mm" style="left:1420px;top:0px;transform:scale(0.1190,0.0952);font-weight:bold"><span class="lb">unaligned_store:</span>
        <span class="mn">movs</span>    <span class="rg">r2</span>, <span class="n">#0</span>
        <span class="mn">movs</span>    <span class="rg">r1</span>, <span class="n">#10</span>
        <span class="mn">ldr</span>     <span class="rg">r3</span>, <span class="lb u">.L2</span>
        <span class="mn">strb</span>    <span class="rg">r1</span>, [<span class="rg">r3</span>]
        <span class="mn">strb</span>    <span class="rg">r2</span>, [<span class="rg">r3</span>, <span class="n">#1</span>]
        <span class="mn">strb</span>    <span class="rg">r2</span>, [<span class="rg">r3</span>, <span class="n">#2</span>]
        <span class="mn">strb</span>    <span class="rg">r2</span>, [<span class="rg">r3</span>, <span class="n">#3</span>]
        <span class="mn">bx</span>      <span class="rg">lr</span>
<span class="lb">.L2:</span>
        <span class="mn">.word</span>   <span class="n">33554433</span>
<span class="lb">unaligned_store_direct:</span>
        <span class="mn">movs</span>    <span class="rg">r2</span>, <span class="n">#10</span>
        <span class="mn">ldr</span>     <span class="rg">r3</span>, <span class="lb u">.L5</span>
        <span class="mn">str</span>     <span class="rg">r2</span>, [<span class="rg">r3</span>]  <span class="lb">@ unaligned</span>
        <span class="mn">bx</span>      <span class="rg">lr</span>
<span class="lb">.L5:</span>
        <span class="mn">.word</span>   <span class="n">33554433</span>
<span class="lb">unaligned_load:</span>
        <span class="mn">ldr</span>     <span class="rg">r3</span>, <span class="lb u">.L8</span>
        <span class="mn">ldr</span>     <span class="rg">r0</span>, [<span class="rg">r3</span>]  <span class="lb">@ unaligned</span>
        <span class="mn">bx</span>      <span class="rg">lr</span>
<span class="lb">.L8:</span>
        <span class="mn">.word</span>   <span class="n">33554433</span>
<span class="lb">unaligned_load_direct:</span>
        <span class="mn">ldr</span>     <span class="rg">r3</span>, <span class="lb u">.L11</span>
        <span class="mn">ldr</span>     <span class="rg">r0</span>, [<span class="rg">r3</span>]  <span class="lb">@ unaligned</span>
        <span class="mn">bx</span>      <span class="rg">lr</span>
<span class="lb">.L11:</span>
        <span class="mn">.word</span>   <span class="n">33554433</span></div>
<div class="r" style="left:1572px;top:0;width:1px;height:1252px;background:#d8d8d8"></div>
<div class="r" style="left:1573px;top:0;width:27px;height:4px;background:#454545"></div>
</div>
<div class="r" style="left:1278px;top:1544px;width:1600px;height:2px;background:#cfcfcf"></div>
<svg class="ab" style="left:1290px;top:1560px" width="40" height="35" viewBox="0 0 40 35"><path d="M30.6 12.6A11.8 11.8 0 1 0 27.7 26.3" stroke="#212529" stroke-width="3.8" fill="none" stroke-linecap="round"/><path d="M30.5 3.5H33.8V15.6H22V12.4H30.5Z" fill="#212529"/></svg>
<svg class="ab" style="left:1358.2px;top:1563.5px" width="20.5" height="28" viewBox="0 0 20.5 28"><path d="M0 0L3.3 2.6L6.8 0L10.2 2.6L13.7 0L17.2 2.6L20.5 0V27.5L17.2 24.9L13.7 27.5L10.2 24.9L6.8 27.5L3.3 24.9L0 27.5Z" fill="#212529"/><path d="M3.8 8.8H16.5M3.8 14H16.5M3.8 19.4H16.5" stroke="#f8f9fa" stroke-width="2" stroke-linecap="round"/></svg>
<div class="t" style="left:1386.50px;top:1558.00px;font-size:28px;line-height:40px;color:#212529;letter-spacing:1.020px;">Output (<span style="color:#008000">0</span>/<span style="color:#ff0000">0</span>)</div>
<div class="t" style="left:1573.70px;top:1556.58px;font-size:24px;line-height:40px;color:#212529;letter-spacing:0.457px;">ARM gcc 8.2</div>
<svg class="ab" style="left:1733px;top:1564px" width="13" height="28" viewBox="0 0 13 28"><circle cx="7" cy="3.5" r="3.5" fill="#212529"/><path d="M1 10H9V24H12V28H1V24H4V14H1Z" fill="#212529"/></svg>
<div class="t" style="left:1767.90px;top:1556.68px;font-size:24px;line-height:40px;color:#212529;letter-spacing:-0.875px;font-style:italic;">- 760ms (8369B)</div>
</div></body></html>
